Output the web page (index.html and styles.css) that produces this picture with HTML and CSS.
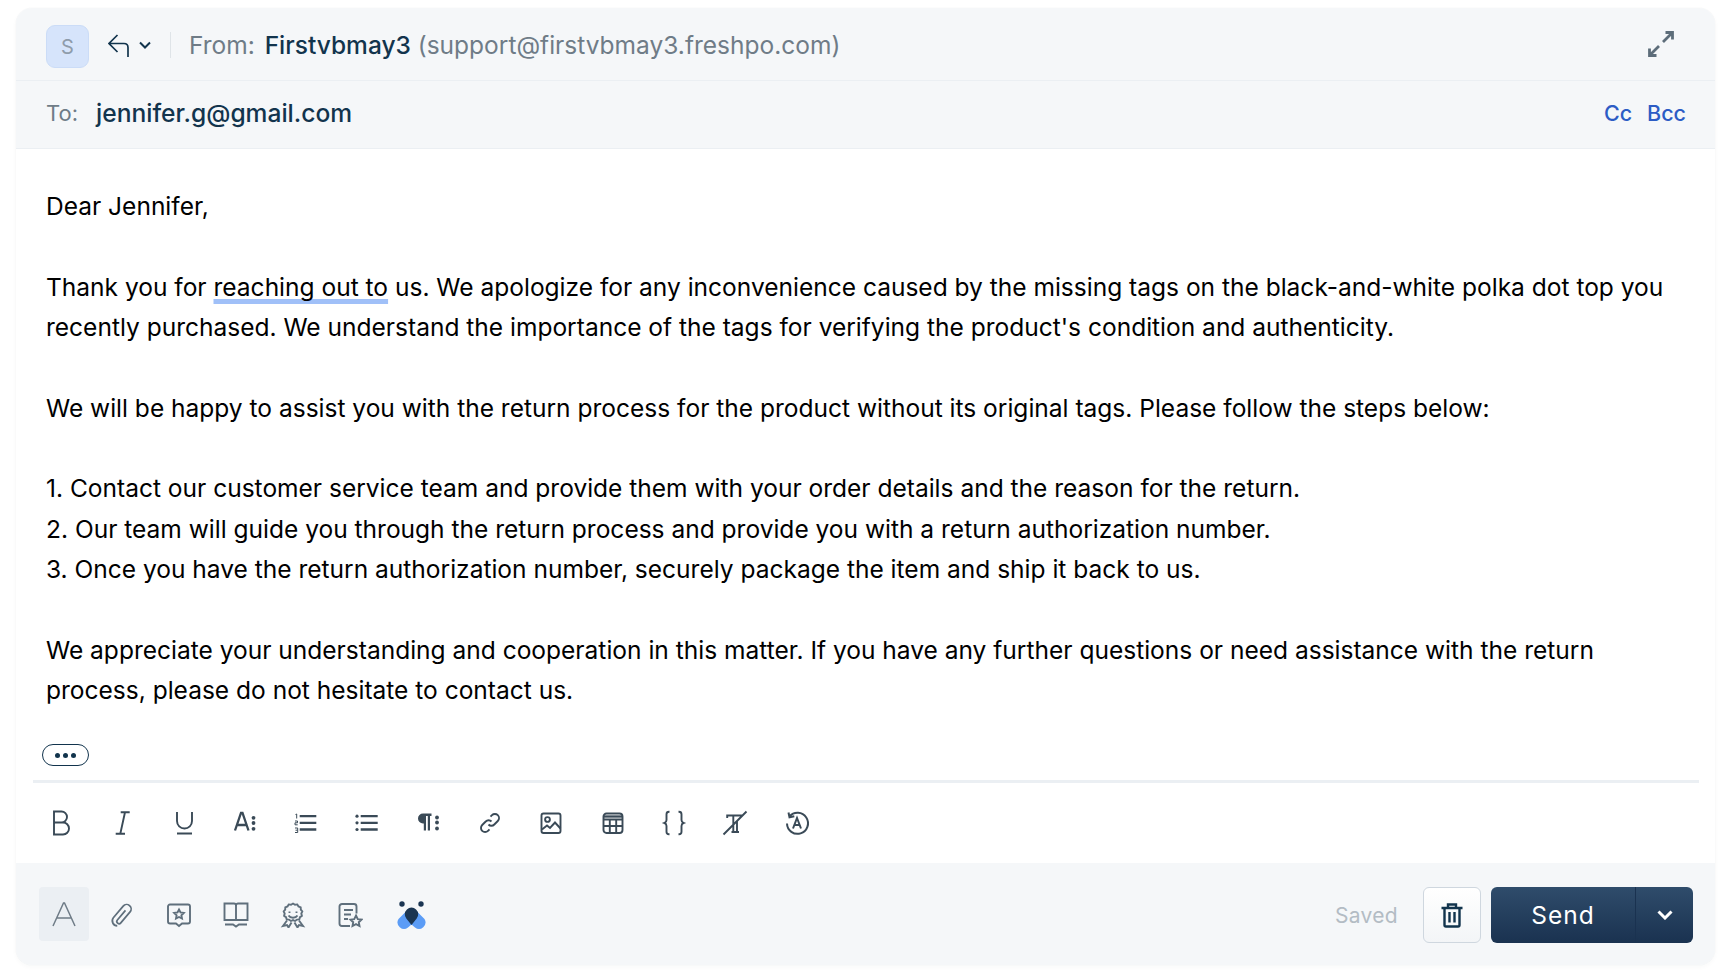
FILE: index.html

```html
<!DOCTYPE html>
<html>
<head>
  <title>Reply</title>
  <link rel="stylesheet" href="styles.css">
</head>
<body>
  <div class="composer">
    <div class="from-row">
      <div class="avatar">S</div>
      <svg class="reply-icon" width="22" height="24" viewBox="0 0 22 24"><path d="M9.500 1 1 9.500 9.500 18M1 9.500h15c2.500 0 4 1.500 4 4V23"/></svg>
      <svg class="caret-icon" width="12" height="8" viewBox="0 0 12 8"><path d="M1 1.500 6 6.500l5-5"/></svg>
      <div class="divider"></div>
      <div class="from-text">
        <span class="from-label">From:</span>
        <span class="from-name">Firstvbmay3</span>
        <span class="from-mail">(support@firstvbmay3.freshpo.com)</span>
      </div>
      <svg class="expand-icon" width="28" height="28" viewBox="0 0 28 28"><path d="M16 12 25 3M18.500 2.500h7v7M12 16l-9 9M2.500 18.500v7h7"/></svg>
    </div>
    <div class="to-row">
      <span class="to-label">To:</span>
      <span class="to-mail">jennifer.g@gmail.com</span>
      <span class="cc-link">Cc</span>
      <span class="cc-link">Bcc</span>
    </div>

    <div class="mail-body">
      <div>Dear Jennifer,</div>
      <div><br></div>
      <div>Thank you for <span class="marked">reaching out to</span> us. We apologize for any inconvenience caused by the missing tags on the black-and-white polka dot top you recently purchased. We understand the importance of the tags for verifying the product's condition and authenticity.</div>
      <div><br></div>
      <div>We will be happy to assist you with the return process for the product without its original tags. Please follow the steps below:</div>
      <div><br></div>
      <div>1. Contact our customer service team and provide them with your order details and the reason for the return.</div>
      <div>2. Our team will guide you through the return process and provide you with a return authorization number.</div>
      <div>3. Once you have the return authorization number, securely package the item and ship it back to us.</div>
      <div><br></div>
      <div>We appreciate your understanding and cooperation in this matter. If you have any further questions or need assistance with the return process, please do not hesitate to contact us.</div>
      <div class="more-pill"><i></i><i></i><i></i></div>
    </div>

    <div class="format-bar">
      <!-- bold, italic, underline, font -->
      <svg class="tool" viewBox="0 0 24 24"><path d="M5 .5h7.500a5.500 5.500 0 0 1 0 11H5zM5 11.500h9a6 6 0 0 1 0 12H5z"/></svg>
      <svg class="tool" viewBox="0 0 24 24"><path d="M10.700 1.200h9M5.700 22.800H15M15 1.200 10.300 22.800"/></svg>
      <svg class="tool" viewBox="0 0 24 24"><path d="M5 1v9a7.500 7.500 0 0 0 15 0V1M5 22.500h15"/></svg>
      <svg class="tool" viewBox="0 0 24 24"><path class="thick" d="M2 19.500 8 2h1.500l6 17.500M4.500 14h9"/><circle class="dot" cx="20.500" cy="6.800" r="1.900"/><circle class="dot" cx="20.500" cy="12" r="1.900"/><circle class="dot" cx="20.500" cy="17.800" r="1.900"/></svg>
      <!-- lists, paragraph -->
      <svg class="tool" viewBox="0 0 24 24"><path class="thick" d="M5.700 5.200h16.600M5.700 11.800h16.600M5.700 18.500h16.600"/><path class="thin" d="M1.500 3.500 2.700 3v4.500M1 10h2.500v1.800H1v2h2.700M1 17h2.700v4.500H1M1.500 19.200h2"/></svg>
      <svg class="tool" viewBox="0 0 24 24"><path class="thick" d="M5.700 5.200h17M5.700 11.800h17M5.700 18.500h17"/><circle class="dot" cx="2" cy="5.200" r="1.600"/><circle class="dot" cx="2" cy="11.800" r="1.600"/><circle class="dot" cx="2" cy="18.500" r="1.600"/></svg>
      <svg class="tool" viewBox="0 0 24 24"><path class="solid" d="M6 2.500h8.500V5H13v14.500h-2.200V5H9v14.500H6.800v-7H6a5 5 0 0 1 0-10z"/><circle class="dot" cx="20" cy="6.500" r="1.900"/><circle class="dot" cx="20" cy="11.500" r="1.900"/><circle class="dot" cx="20" cy="17.500" r="1.900"/></svg>
      <!-- link, image, table, placeholder, clear, history -->
      <svg class="tool" viewBox="0 0 24 24"><path d="M10.500 13.500a4 4 0 0 0 5.800 0l3.500-3.500a4.100 4.100 0 0 0-5.800-5.800L12.500 5.700M13.500 10.500a4 4 0 0 0-5.800 0L4.200 14a4.100 4.100 0 0 0 5.800 5.800l1.500-1.500"/></svg>
      <svg class="tool" viewBox="0 0 24 24"><rect x="2.500" y="2.500" width="19" height="19.500" rx="2"/><circle cx="8.500" cy="8.500" r="2.400"/><path d="M3 18.500l5-4 3 2.500 5-5.500 5.500 6"/></svg>
      <svg class="tool" viewBox="0 0 24 24"><rect x="2.500" y="2.500" width="19" height="19.500" rx="3"/><path d="M2.500 8.500h19M2.500 15h19M8.800 8.500V22M15.200 8.500V22"/><path class="thick" d="M3 5.500h18"/></svg>
      <svg class="tool" viewBox="0 0 24 24"><path d="M7.500 .8H7C5.500 .8 4.500 1.800 4.500 3.300V9c0 1.500-.7 2.500-2 3 1.300.5 2 1.500 2 3v5.700c0 1.500 1 2.500 2.500 2.500h.5M16.500 .8h.5c1.500 0 2.500 1 2.500 2.500V9c0 1.500.7 2.500 2 3-1.300.5-2 1.500-2 3v5.700c0 1.500-1 2.500-2.500 2.500h-.5"/></svg>
      <svg class="tool" viewBox="0 0 24 24"><path d="M4.200 7V4.500h15M10.300 4.500v16M14 9.500v11M8.500 21h7.500M.5 23.500l23-23"/></svg>
      <svg class="tool heavy" viewBox="0 0 24 24"><path d="M4.500 5.500a10.500 10.500 0 1 1-2.500 7"/><path d="M3.500 1.500l1 4.800 4.800-1"/><path d="M8 17.500 12 7l4 10.500M9.300 14h5.400"/></svg>
    </div>

    <div class="action-bar">
      <div class="action-tools">
        <div class="active-tool">
          <svg class="big-a" width="26" height="26" viewBox="0 0 26 26"><path d="M2 25 12.500 2h1L24 25M6 17h14"/></svg>
        </div>
        <svg class="act" viewBox="0 0 26 26"><path transform="translate(13 12.500) rotate(40) scale(.9)" d="M0-6V8a2.500 2.500 0 0 0 5 0V-8a5 5 0 0 0-10 0V9a5.500 5.500 0 0 0 9 4"/></svg>
        <svg class="act" viewBox="0 0 26 26"><path d="M4 2.500h18a2 2 0 0 1 2 2v15a2 2 0 0 1-2 2h-6l-3 2.500-3-2.500H4a2 2 0 0 1-2-2v-15a2 2 0 0 1 2-2z"/><path d="M13 7.500l1.500 3 3.300.5-2.400 2.300.6 3.300-3-1.600-3 1.600.6-3.300L8.200 11l3.300-.5z"/></svg>
        <svg class="act" viewBox="0 0 26 26"><path d="M1.500 1.500H11a2 2 0 0 1 2 2 2 2 0 0 1 2-2h9.500V18h-23zM13 3.500V18M2 22.500h8l3 2 3-2h8"/></svg>
        <svg class="act" viewBox="0 0 26 26"><path d="M13 1.500l2 1.200 2.300-.3 1.200 2 2.200 1 .1 2.300 1.500 1.800-1 2.100.6 2.200-1.900 1.400-.7 2.200-2.300.2-1.900 1.400-2.100-.9-2.100.9-1.900-1.400-2.300-.2-.7-2.200-1.900-1.400.6-2.200-1-2.100 1.500-1.800.1-2.300 2.200-1 1.200-2 2.300.3z"/><path d="M9.500 9.500v1.500M16.500 9.500v1.500M8.500 13.500c2 3 7 3 9 0M7 18.500 3 24l4-1 1.500 2.500 3-5M19 18.500l4 5.500-4-1-1.500 2.500-3-5"/></svg>
        <svg class="act" viewBox="0 0 26 26"><path d="M13 24H5a2.500 2.500 0 0 1-2.500-2.500v-17A2.500 2.500 0 0 1 5 2h12a2.500 2.500 0 0 1 2.500 2.500v7M7 8h9M7 12.500h7M7 17h4"/><path d="M19 13.500l1.800 3.600 3.700.5-2.700 2.600.7 3.800-3.500-1.900-3.500 1.900.7-3.800-2.700-2.600 3.700-.5z"/></svg>
        <svg class="logo" width="29" height="29" viewBox="0 0 29 29"><circle class="logo-dark" cx="5" cy="3" r="2.700"/><circle class="logo-dark" cx="24" cy="3" r="2.700"/><path class="logo-blue" d="M9 10.500 1.500 18A6.500 6.500 0 0 0 11 26.500l3.500-3 3.500 3A6.500 6.500 0 0 0 27.500 18L20 10.500z"/><path class="logo-dark" d="M14.500 24 9.300 17.500a6.700 6.700 0 1 1 10.400 0z"/></svg>
      </div>
      <span class="saved">Saved</span>
      <div class="trash-btn">
        <svg width="24" height="26" viewBox="0 0 24 26"><path d="M1.500 6h21M8 6V2.500h8V6M4.500 6v17a1.500 1.500 0 0 0 1.500 1.500h12a1.500 1.500 0 0 0 1.500-1.500V6M9.500 10v10.500M14.500 10v10.500"/></svg>
      </div>
      <div class="send-btn">
        <span class="send-label">Send</span>
        <span class="send-more">
          <svg width="16" height="10" viewBox="0 0 16 10"><path d="M1.500 1.500 8 8l6.500-6.500"/></svg>
        </span>
      </div>
    </div>
  </div>
</body>
</html>
```

FILE: styles.css

```css
body {
  margin: 0;
  padding: 8px 9px 7px 16px;
  background-color: #fff;
  font-family: "Inter", "Noto Sans", sans-serif;
}

.composer {
  display: flex;
  flex-direction: column;
  height: 957px;
  border-radius: 16px;
  overflow: hidden;
  background-color: #fff;
  box-shadow: 0 0 1px rgba(18, 52, 77, 0.1), 0 2px 5px rgba(18, 52, 77, 0.03);
}

/* header rows */
.from-row {
  display: flex;
  align-items: center;
  height: 73px;
  padding: 0 40px 0 30px;
  background-color: #f5f7f9;
  border-bottom: 1px solid #ebeff3;
  box-sizing: border-box;
}

.avatar {
  display: flex;
  align-items: center;
  justify-content: center;
  width: 43px;
  height: 43px;
  margin-top: 5px;
  border: 1px solid #cbdcf7;
  border-radius: 9px;
  background-color: #d6e4fb;
  color: #8f9cab;
  font-size: 20px;
  box-sizing: border-box;
}

.reply-icon {
  margin: 3px 0 0 19px;
  fill: none;
  stroke: #12344d;
  stroke-width: 1.700;
}

.caret-icon {
  margin: 2px 0 0 9px;
  fill: none;
  stroke: #12344d;
  stroke-width: 2;
}

.divider {
  width: 1px;
  height: 26px;
  margin: 1px 18px 0 19px;
  background-color: #dfe4e8;
}

.from-text {
  flex: 1;
  margin-top: 1px;
  font-size: 24.500px;
  color: #6f7c87;
}

.from-label {
  margin-right: 3px;
}

.from-name {
  font-weight: 500;
  color: #12344d;
}

.expand-icon {
  fill: none;
  stroke: #5d6d7a;
  stroke-width: 2.800;
}

.to-row {
  display: flex;
  align-items: center;
  height: 68px;
  padding: 0 29px 3px 30px;
  background-color: #f5f7f9;
  border-bottom: 1px solid #ebeff3;
  box-sizing: border-box;
}

.to-label {
  width: 50px;
  font-size: 22px;
  color: #6f7c87;
}

.to-mail {
  flex: 1;
  font-size: 24.600px;
  font-weight: 500;
  color: #12344d;
}

.cc-link {
  margin-left: 15px;
  font-size: 21.500px;
  font-weight: 500;
  color: #2c5cc5;
}

/* message text */
.mail-body {
  flex: 1;
  padding: 37px 30px 0;
  font-size: 24.520px;
  line-height: 40.330px;
  color: #000;
}

.marked {
  text-decoration: underline;
  text-decoration-color: #a0c0f8;
  text-decoration-thickness: 4.500px;
  text-underline-offset: 3px;
  text-decoration-skip-ink: none;
}

.more-pill {
  display: flex;
  align-items: center;
  justify-content: center;
  gap: 3px;
  width: 47px;
  height: 22px;
  margin: 34px 0 0 -4px;
  border: 1px solid #12344d;
  border-radius: 11px;
  box-sizing: border-box;
}

.more-pill i {
  width: 5px;
  height: 5px;
  border-radius: 50%;
  background-color: #12344d;
}

/* formatting toolbar */
.format-bar {
  display: flex;
  align-items: center;
  gap: 37.300px;
  height: 83px;
  margin: 0 16px 0 17px;
  padding: 0 0 1px 16px;
  border-top: 3px solid #ebeff3;
  box-sizing: border-box;
}

.tool {
  width: 24px;
  height: 24px;
  flex-shrink: 0;
  overflow: visible;
  fill: none;
  stroke: #3a4a57;
  stroke-width: 1.900;
}

.tool.heavy {
  stroke-width: 2;
}

.tool .thick {
  stroke-width: 2.300;
}

.tool .thin {
  stroke-width: 1;
}

.tool .dot,
.tool .solid {
  fill: #3a4a57;
  stroke: none;
}

/* bottom actions */
.action-bar {
  display: flex;
  align-items: center;
  height: 102px;
  padding: 2px 22px 0 23px;
  background-color: #f5f7f9;
  box-sizing: border-box;
}

.action-tools {
  flex: 1;
  display: flex;
  align-items: center;
  gap: 31px;
}

.active-tool {
  display: flex;
  align-items: center;
  justify-content: center;
  width: 50px;
  height: 54px;
  margin: -2px -11.500px 0 0;
  border-radius: 4px;
  background-color: #ebeff3;
}

.big-a {
  fill: none;
  stroke: #6f7c87;
  stroke-width: 1.500;
}

.act {
  width: 26px;
  height: 26px;
  flex-shrink: 0;
  fill: none;
  stroke: #5f6f7c;
  stroke-width: 1.900;
}

.logo {
  margin-left: 3px;
}

.logo-dark {
  fill: #1a3552;
}

.logo-blue {
  fill: #5b9cf6;
}

.saved {
  margin-right: 25px;
  font-size: 21px;
  color: #b3bcc4;
  letter-spacing: 0.300px;
}

.trash-btn {
  display: flex;
  align-items: center;
  justify-content: center;
  width: 58px;
  height: 56px;
  margin-right: 10px;
  border: 1px solid #cfd7df;
  border-radius: 6px;
  background: linear-gradient(#fff, #f3f5f7);
  box-sizing: border-box;
}

.trash-btn svg {
  fill: none;
  stroke: #12344d;
  stroke-width: 2.400;
}

.send-btn {
  display: flex;
  height: 56px;
  width: 202px;
  border-radius: 6px;
  overflow: hidden;
  background: linear-gradient(#2f4c6b, #1a3250);
  color: #fff;
}

.send-label {
  flex: 1;
  display: flex;
  align-items: center;
  justify-content: center;
  font-size: 24.500px;
  letter-spacing: 1px;
}

.send-more {
  display: flex;
  align-items: center;
  justify-content: center;
  width: 58px;
  border-left: 1px solid #1a3250;
  box-sizing: border-box;
}

.send-more svg {
  fill: none;
  stroke: #fff;
  stroke-width: 3;
}
```
